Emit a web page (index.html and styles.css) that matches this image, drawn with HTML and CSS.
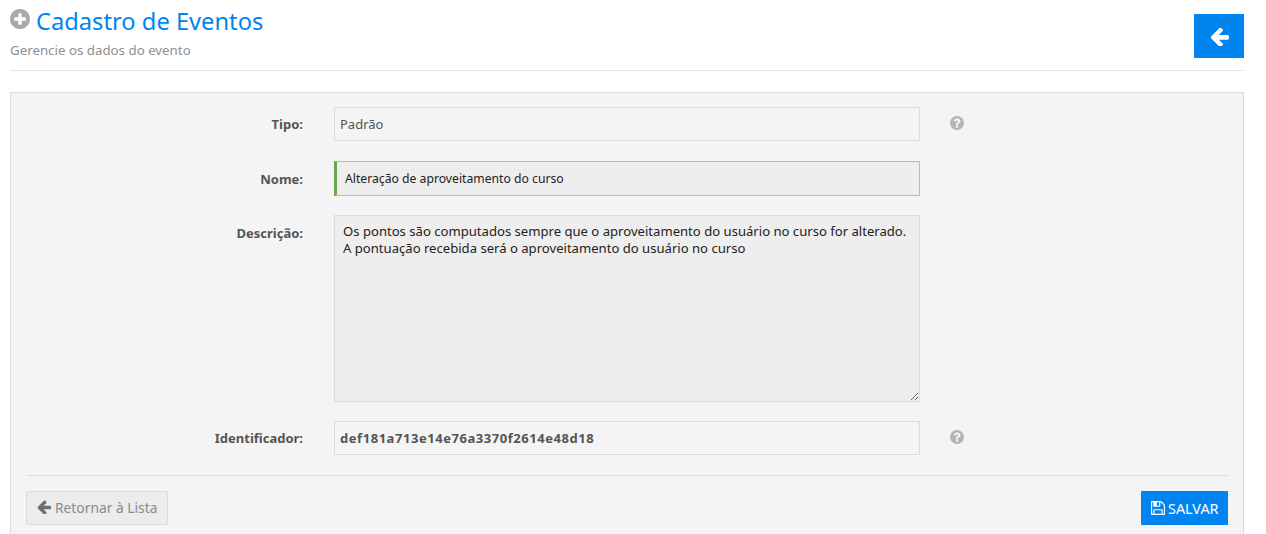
FILE: index.html
```html
<!DOCTYPE html>
<html lang="pt-BR">
<head>
<meta charset="utf-8">
<title>Cadastro de Eventos</title>
<link rel="stylesheet" href="styles.css">
</head>
<body>
<header class="page-head">
  <div class="head-text">
    <h1 class="title">
      <svg class="title-icon" viewBox="128 128 1536 1536"><path d="M1344 960v-128q0-26-19-45t-45-19h-256v-256q0-26-19-45t-45-19h-128q-26 0-45 19t-19 45v256h-256q-26 0-45 19t-19 45v128q0 26 19 45t45 19h256v256q0 26 19 45t45 19h128q26 0 45-19t19-45v-256h256q26 0 45-19t19-45zm320-64q0 209-103 385.500t-279.500 279.500-385.500 103-385.500-103-279.500-279.500-103-385.500 103-385.500 279.500-279.500 385.500-103 385.500 103 279.500 279.500 103 385.500z"/></svg>
      <span>Cadastro de Eventos</span>
    </h1>
    <p class="subtitle">Gerencie os dados do evento</p>
  </div>
  <a class="back-btn" href="#">
    <svg class="back-icon" viewBox="128 128 1536 1536"><path d="M1664 896v128q0 53-32.500 90.500t-84.500 37.500h-704l293 294q38 36 38 90t-38 90l-75 76q-37 37-90 37-52 0-91-37l-651-652q-37-37-37-90 0-52 37-91l651-650q38-38 91-38 52 0 90 38l75 74q38 38 38 91t-38 91l-293 293h704q52 0 84.500 37.500t32.500 90.500z"/></svg>
  </a>
</header>

<section class="panel">
  <form class="form">
    <div class="row row-tipo">
      <label class="label">Tipo:</label>
      <input class="field field-plain" type="text" value="Padrão" readonly>
      <svg class="help" viewBox="128 128 1536 1536"><path d="M1024 1376v-192q0-14-9-23t-23-9h-192q-14 0-23 9t-9 23v192q0 14 9 23t23 9h192q14 0 23-9t9-23zm256-672q0-88-55.500-163t-138.500-116-170-41q-243 0-371 213-15 24 8 42l132 100q7 6 19 6 16 0 25-12 53-68 86-92 34-24 86-24 48 0 85.500 26t37.500 59q0 38-20 61t-68 45q-63 28-115.500 86.500t-52.500 125.500v36q0 14 9 23t23 9h192q14 0 23-9t9-23q0-19 21.500-49.500t54.500-49.500q32-18 49-28.500t46-35 44.500-48 28-60.500 12.500-81zm384 192q0 209-103 385.500t-279.500 279.500-385.500 103-385.500-103-279.500-279.500-103-385.500 103-385.500 279.500-279.500 385.500-103 385.500 103 279.500 279.500 103 385.500z"/></svg>
    </div>
    <div class="row row-nome">
      <label class="label label-low">Nome:</label>
      <input class="field field-required" type="text" value="Alteração de aproveitamento do curso" readonly>
    </div>
    <div class="row row-desc">
      <label class="label label-low">Descrição:</label>
      <textarea class="field field-area" readonly>Os pontos são computados sempre que o aproveitamento do usuário no curso for alterado.
A pontuação recebida será o aproveitamento do usuário no curso</textarea>
    </div>
    <div class="row row-id">
      <label class="label">Identificador:</label>
      <input class="field field-plain field-bold" type="text" value="def181a713e14e76a3370f2614e48d18" readonly>
      <svg class="help" viewBox="128 128 1536 1536"><path d="M1024 1376v-192q0-14-9-23t-23-9h-192q-14 0-23 9t-9 23v192q0 14 9 23t23 9h192q14 0 23-9t9-23zm256-672q0-88-55.500-163t-138.500-116-170-41q-243 0-371 213-15 24 8 42l132 100q7 6 19 6 16 0 25-12 53-68 86-92 34-24 86-24 48 0 85.500 26t37.500 59q0 38-20 61t-68 45q-63 28-115.500 86.500t-52.500 125.500v36q0 14 9 23t23 9h192q14 0 23-9t9-23q0-19 21.500-49.500t54.500-49.500q32-18 49-28.500t46-35 44.500-48 28-60.500 12.500-81zm384 192q0 209-103 385.500t-279.500 279.500-385.500 103-385.500-103-279.500-279.500-103-385.500 103-385.500 279.500-279.500 385.500-103 385.500 103 279.500 279.500 103 385.500z"/></svg>
    </div>
  </form>
  <footer class="actions">
    <a class="btn btn-return" href="#">
      <svg class="btn-icon" viewBox="128 128 1536 1536"><path d="M1664 896v128q0 53-32.500 90.500t-84.500 37.500h-704l293 294q38 36 38 90t-38 90l-75 76q-37 37-90 37-52 0-91-37l-651-652q-37-37-37-90 0-52 37-91l651-650q38-38 91-38 52 0 90 38l75 74q38 38 38 91t-38 91l-293 293h704q52 0 84.500 37.500t32.500 90.500z"/></svg>
      <span>Retornar à Lista</span>
    </a>
    <a class="btn btn-save" href="#">
      <svg class="btn-icon" viewBox="128 128 1536 1536"><path d="M512 1536h768v-384h-768v384zm896 0h128v-896q0-14-10-38.500t-20-34.500l-281-281q-10-10-34-20t-39-10v416q0 40-28 68t-68 28h-576q-40 0-68-28t-28-68v-416h-128v1280h128v-416q0-40 28-68t68-28h832q40 0 68 28t28 68v416zm-384-928v-320q0-13-9.500-22.500t-22.500-9.500h-192q-13 0-22.500 9.500t-9.500 22.500v320q0 13 9.500 22.500t22.500 9.500h192q13 0 22.500-9.500t9.500-22.500zm640 32v928q0 40-28 68t-68 28h-1344q-40 0-68-28t-28-68v-1344q0-40 28-68t68-28h928q40 0 88 20t76 48l280 280q28 28 48 76t20 88z"/></svg>
      <span>SALVAR</span>
    </a>
  </footer>
</section>
</body>
</html>
```
FILE: styles.css
```css
* { box-sizing: border-box; }
html, body { height: 534px; overflow: hidden; }
body {
  margin: 0;
  padding: 0 22px 0 10px;
  background: #fff;
  font-family: "Noto Sans", "Open Sans", sans-serif;
  font-size: 13px;
  color: #555;
}
.page-head {
  height: 71px;
  display: flex;
  justify-content: space-between;
  align-items: flex-start;
  border-bottom: 1px solid #e4e4e4;
  margin-bottom: 21px;
}
.title {
  margin: 4px 0 0;
  display: flex;
  align-items: flex-start;
  gap: 6px;
  font-size: 23.7px;
  font-weight: 400;
  line-height: 35px;
  color: #0084f0;
}
.title-icon { width: 20px; height: 20px; margin-top: 5px; fill: #a9a9a9; flex: none; }
.subtitle { margin: 2px 0 0; font-size: 13.300px; line-height: 18px; color: #8f8f8f; }
.back-btn {
  width: 50px;
  height: 44px;
  margin-top: 14px;
  background: #0084f0;
  display: flex;
  align-items: center;
  justify-content: center;
}
.back-icon { width: 19px; height: 19px; fill: #fff; }
.panel {
  height: 460px;
  background: #f4f4f4;
  border: 1px solid #dcdcdc;
  border-bottom: 0;
  padding: 14px 15px 0;
}
.form { display: flex; flex-direction: column; gap: 20px; }
.row {
  display: grid;
  grid-template-columns: 277px 586px 20px;
  column-gap: 31px;
}
.row-desc, .row-id { margin-top: -1px; }
.label {
  text-align: right;
  font-weight: 700;
  font-size: 13px;
  line-height: 18px;
  padding-top: 8px;
  color: #555;
}
.label-low { padding-top: 9px; }
.field {
  display: block;
  width: 586px;
  height: 34px;
  margin: 0;
  border: 1px solid #dcdcdc;
  border-radius: 0;
  outline: 0;
  background: #f4f4f4;
  font-family: inherit;
  font-size: 13px;
  color: #555;
  padding: 0 5px;
}
.field-required {
  height: 35px;
  background: #eeeeee;
  border-color: #aec5a0;
  border-left: 3px solid #6aa84f;
  color: #222;
  font-size: 12.200px;
  padding: 0 8px;
}
.field-area {
  height: 187px;
  background: #eeeeee;
  color: #222;
  font-size: 13.100px;
  line-height: 17px;
  padding: 7px 8px;
  resize: vertical;
}
.field-bold { font-weight: 700; color: #555; font-size: 13px; letter-spacing: 0.550px; }
.help { width: 14px; height: 14px; margin: 9px 0 0 -1px; fill: #b4b4b4; }
.actions {
  margin-top: 20px;
  border-top: 1px solid #dcdcdc;
  padding-top: 15px;
  display: flex;
  justify-content: space-between;
  align-items: flex-start;
}
.btn {
  height: 34px;
  display: flex;
  align-items: center;
  gap: 3px;
  text-decoration: none;
}
.btn-icon { width: 14px; height: 14px; flex: none; }
.btn-return {
  width: 142px;
  padding: 0 0 2px 10px;
  gap: 4px;
  background: #ececec;
  border: 1px solid #dcdcdc;
  color: #8a8a8a;
  font-size: 13.800px;
}
.btn-return .btn-icon { fill: #6f6f6f; }
.btn-save {
  width: 87px;
  padding-left: 10px;
  background: #0084f0;
  color: #fff;
  font-size: 14.400px;
}
.btn-save .btn-icon { fill: #fff; }
```
